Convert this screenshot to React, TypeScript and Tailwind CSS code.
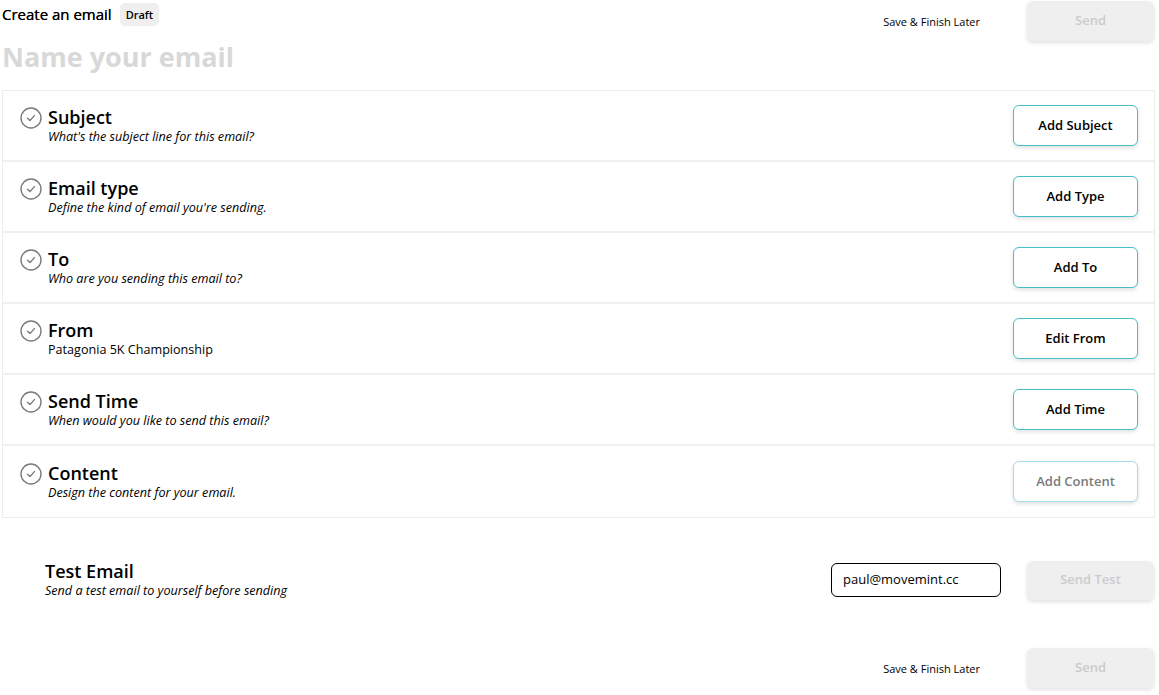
import React from "react";

const rows = [
  { title: "Subject", sub: "What's the subject line for this email?", italic: true, btn: "Add Subject" },
  { title: "Email type", sub: "Define the kind of email you're sending.", italic: true, btn: "Add Type" },
  { title: "To", sub: "Who are you sending this email to?", italic: true, btn: "Add To" },
  { title: "From", sub: "Patagonia 5K Championship", italic: false, btn: "Edit From" },
  { title: "Send Time", sub: "When would you like to send this email?", italic: true, btn: "Add Time" },
  { title: "Content", sub: "Design the content for your email.", italic: true, btn: "Add Content", disabled: true },
];

function CheckIcon() {
  return (
    <svg width="22" height="22" viewBox="0 0 22 22" className="shrink-0">
      <circle cx="11" cy="11" r="10" fill="none" stroke="#7a7a7a" strokeWidth="1.4" />
      <path d="M7.6 11.3 L10 13.6 L14.4 8.6" fill="none" stroke="#7a7a7a" strokeWidth="1.4" strokeLinecap="round" strokeLinejoin="round" />
    </svg>
  );
}

function SendBtn({ label, h = "h-[40px]" }: { label: string; h?: string }) {
  return (
    <button className={`w-[127px] ${h} rounded-[6px] bg-[#efefef] text-[13px] font-semibold text-[#cbcbcb] shadow-[0_2px_4px_rgba(0,0,0,0.12)]`}>
      {label}
    </button>
  );
}

export default function App() {
  return (
    <div
      className="w-[1159px] h-[695px] bg-white text-black overflow-hidden"
      style={{ fontFamily: '"Open Sans", "Noto Sans", sans-serif' }}
    >
      {/* header */}
      <div className="flex items-start justify-between pl-[2px] pr-[5px] pt-[1px]">
        <div className="flex items-center gap-[8px] pt-[2px]">
          <span className="text-[15px] font-medium leading-[23px] [text-shadow:0_0_0.3px_#000]">Create an email</span>
          <span className="h-[23px] px-[6px] rounded-[5px] bg-[#efefef] text-[11px] font-semibold leading-[23px]">Draft</span>
        </div>
        <div className="flex items-center gap-[47px]">
          <span className="text-[11px] leading-[15px]">Save &amp; Finish Later</span>
          <SendBtn label="Send" />
        </div>
      </div>

      <div className="pl-[2px] -mt-[2px] text-[27px] font-bold leading-[36px] text-[#d8d8d8]">Name your email</div>

      {/* card */}
      <div className="ml-[2px] mr-[4px] mt-[15px] border border-[#ececec]">
        {rows.map((r, i) => (
          <div
            key={r.title}
            className={`h-[71px] flex items-center justify-between pl-[17px] pr-[16px] ${i < rows.length - 1 ? "border-b-2 border-[#f0f0f0]" : ""}`}
          >
            <div className="flex items-start gap-[6px]">
              <div className="mt-[2px]">
                <CheckIcon />
              </div>
              <div className="pt-[1px]">
                <div className="text-[18px] font-semibold leading-[22px]">{r.title}</div>
                <div className={`text-[12.6px] leading-[18px] ${r.italic ? "italic" : ""}`}>{r.sub}</div>
              </div>
            </div>
            <button
              className={`w-[125px] h-[41px] rounded-[6px] bg-white border text-[13px] font-semibold shadow-[0_2px_4px_rgba(0,0,0,0.12)] ${
                r.disabled ? "border-[#a3dde5] text-[#7a7a7a]" : "border-[#45bfc9] text-black"
              }`}
            >
              {r.btn}
            </button>
          </div>
        ))}
      </div>

      {/* test email */}
      <div className="mt-[41px] h-[42px] flex items-center justify-between pl-[45px] pr-[5px]">
        <div>
          <div className="text-[18px] font-semibold leading-[22px]">Test Email</div>
          <div className="text-[12.6px] italic leading-[18px]">Send a test email to yourself before sending</div>
        </div>
        <div className="flex items-center gap-[26px]">
          <div className="w-[170px] h-[34px] rounded-[6px] border border-black px-[11px] flex items-center text-[13px]">
            paul@movemint.cc
          </div>
          <SendBtn label="Send Test" h="h-[39px]" />
        </div>
      </div>

      {/* footer */}
      <div className="mt-[47px] flex items-center justify-end gap-[47px] pr-[5px]">
        <span className="text-[11px] leading-[15px]">Save &amp; Finish Later</span>
        <SendBtn label="Send" />
      </div>
    </div>
  );
}
